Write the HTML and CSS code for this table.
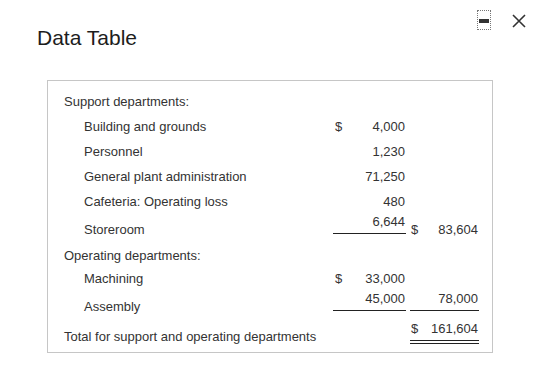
FILE: index.html
```html
<!DOCTYPE html>
<html>
<head>
<meta charset="utf-8">
<link rel="stylesheet" href="styles.css">
</head>
<body>
<div class="page">
  <div class="header">
    <h1 class="title">Data Table</h1>
    <div class="tools">
      <span class="min-btn"><span class="min-bar"></span></span>
      <svg class="close-btn" width="14" height="14" viewBox="0 0 14 14"><path d="M1 1 L13 13 M13 1 L1 13" stroke="#333" stroke-width="1.6" fill="none"/></svg>
    </div>
  </div>
  <div class="box">
    <div class="row">
      <div class="label">Support departments:</div>
    </div>
    <div class="row">
      <div class="label sub">Building and grounds</div>
      <div class="amt a1"><span>$</span><span>4,000</span></div>
    </div>
    <div class="row">
      <div class="label sub">Personnel</div>
      <div class="amt a1"><span></span><span>1,230</span></div>
    </div>
    <div class="row">
      <div class="label sub">General plant administration</div>
      <div class="amt a1"><span></span><span>71,250</span></div>
    </div>
    <div class="row">
      <div class="label sub">Cafeteria: Operating loss</div>
      <div class="amt a1"><span></span><span>480</span></div>
    </div>
    <div class="row tall">
      <div class="label sub">Storeroom</div>
      <div class="amt a1 under"><span></span><span>6,644</span></div>
      <div class="gap"></div>
      <div class="amt a2"><span>$</span><span>83,604</span></div>
    </div>
    <div class="row short">
      <div class="label">Operating departments:</div>
    </div>
    <div class="row">
      <div class="label sub">Machining</div>
      <div class="amt a1"><span>$</span><span>33,000</span></div>
    </div>
    <div class="row tall">
      <div class="label sub">Assembly</div>
      <div class="amt a1 under"><span></span><span>45,000</span></div>
      <div class="gap"></div>
      <div class="amt a2 under"><span></span><span>78,000</span></div>
    </div>
    <div class="row tall">
      <div class="label">Total for support and operating departments</div>
      <div class="amt a1 blank"></div>
      <div class="gap"></div>
      <div class="amt a2 dbl"><span>$</span><span>161,604</span></div>
    </div>
  </div>
</div>
</body>
</html>
```

FILE: styles.css
```css
* { box-sizing: border-box; }
html, body { margin: 0; padding: 0; background: #fff; }
body {
  font-family: "Liberation Sans", Arial, Helvetica, sans-serif;
  color: #333;
  width: 542px;
  height: 392px;
  overflow: hidden;
}
.page { padding: 0; }
.header {
  display: flex;
  justify-content: space-between;
  align-items: flex-start;
  height: 80px;
}
.title {
  margin: 25px 0 0 37px;
  font-size: 21px;
  line-height: 26px;
  font-weight: normal;
  color: #1d1d1d;
}
.tools {
  display: flex;
  align-items: flex-start;
  margin: 10px 16px 0 0;
  gap: 21px;
}
.min-btn {
  display: flex;
  align-items: center;
  justify-content: center;
  width: 14px;
  height: 20px;
  border: 1px dotted #777;
}
.min-bar {
  display: block;
  width: 10px;
  height: 4px;
  background: #333;
  margin-top: 2px;
}
.close-btn { margin-top: 4px; }
.box {
  margin-left: 47px;
  width: 446px;
  border: 1px solid #c6c6c6;
  padding: 8px 13px 1px 16px;
  font-size: 13px;
  line-height: 15px;
}
.row {
  display: grid;
  grid-template-columns: 269px 73px 4px 69px;
  align-items: center;
  height: 25px;
}
.row.tall { height: 30px; }
.row.short { height: 22px; }
.label.sub { padding-left: 20px; }
.amt {
  display: flex;
  justify-content: space-between;
}
.a1 { padding: 0 1px 0 2px; grid-column: 2; }
.a2 { padding: 0 1px 0 1px; grid-column: 4; }
.under {
  align-self: start;
  border-bottom: 1px solid #222;
  padding-bottom: 4px;
}
.dbl {
  align-self: start;
  border-bottom: 4px double #222;
  padding-bottom: 4px;
}
.blank { height: 1px; }
```
